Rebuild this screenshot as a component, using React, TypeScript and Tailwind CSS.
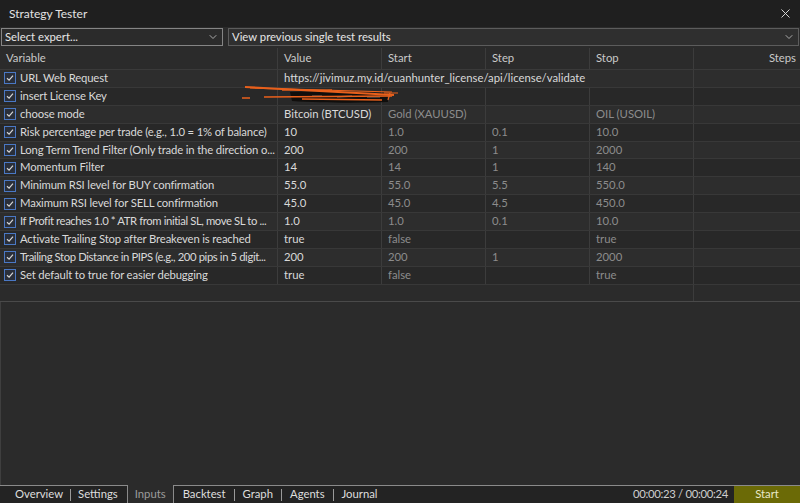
import { ChevronDown, X } from "lucide-react";

interface Param {
  name: string;
  value: string;
  start?: string;
  step?: string;
  stop?: string;
  tight?: boolean;
}

const params: Param[] = [
  { name: "URL Web Request", value: "https://jivimuz.my.id/cuanhunter_license/api/license/validate" },
  { name: "insert License Key", value: "" },
  { name: "choose mode", value: "Bitcoin (BTCUSD)", start: "Gold (XAUUSD)", step: "", stop: "OIL (USOIL)" },
  { name: "Risk percentage per trade (e.g., 1.0 = 1% of balance)", value: "10", start: "1.0", step: "0.1", stop: "10.0" },
  { name: "Long Term Trend Filter (Only trade in the direction o...", value: "200", start: "200", step: "1", stop: "2000" },
  { name: "Momentum Filter", value: "14", start: "14", step: "1", stop: "140" },
  { name: "Minimum RSI level for BUY confirmation", value: "55.0", start: "55.0", step: "5.5", stop: "550.0" },
  { name: "Maximum RSI level for SELL confirmation", value: "45.0", start: "45.0", step: "4.5", stop: "450.0" },
  { name: "If Profit reaches 1.0 * ATR from initial SL, move SL to ...", value: "1.0", start: "1.0", step: "0.1", stop: "10.0", tight: true },
  { name: "Activate Trailing Stop after Breakeven is reached", value: "true", start: "false", step: "", stop: "true" },
  { name: "Trailing Stop Distance in PIPS (e.g., 200 pips in 5 digit...", value: "200", start: "200", step: "1", stop: "2000", tight: true },
  { name: "Set default to true for easier debugging", value: "true", start: "false", step: "", stop: "true" },
];

function CheckBox() {
  return (
    <div className="w-[12px] h-[12px] border border-[#4a78c4] bg-[#2a2f3a] flex items-center justify-center shrink-0">
      <svg width="8" height="8" viewBox="0 0 8 8">
        <path d="M1 4.2 L3.1 6.2 L7 1.6" stroke="#d6d6d6" strokeWidth="1.2" fill="none" />
      </svg>
    </div>
  );
}

// orange marker scribble hiding the license key
function Scribble() {
  return (
    <svg className="absolute left-[242px] top-[84px] pointer-events-none" width="160" height="22" viewBox="0 0 160 22">
      <path d="M48 8 C80 7 110 8 145 9 L146 18 C120 19 80 19 50 17 Z" fill="#100e0c" />
      <path d="M70 12 L80 12 M95 13 L110 12 M125 13 L138 13" stroke="#5a4a40" strokeWidth="1.5" />
      <path d="M3 3 L152 11" stroke="#e8601c" strokeWidth="2" />
      <path d="M8 4 L150 8" stroke="#e8601c" strokeWidth="1.2" />
      <path d="M0 14 L8 14 M22 13 L150 12 M60 15 L140 16" stroke="#e8601c" strokeWidth="1.3" />
      <path d="M148 9 L146 16 M142 9 L156 9" stroke="#e8601c" strokeWidth="1.2" />
      <path d="M40 6 C60 5 70 7 90 6" stroke="#e8601c" strokeWidth="1.5" fill="none" />
    </svg>
  );
}

export default function App() {
  const cell = "h-full flex items-center px-[6px] border-r border-[#3c3c3c] overflow-hidden whitespace-nowrap";

  return (
    <div
      className="relative w-[800px] h-[503px] bg-[#2b2b2b] text-[#d9d9d9] text-[11.3px] overflow-hidden flex flex-col"
      style={{ fontFamily: 'Lato, "Noto Sans", sans-serif' }}
    >
      {/* title bar */}
      <div className="h-[27px] bg-[#1f1f1f] flex items-center justify-between pl-[9px] pr-[7px] shrink-0">
        <span className="text-[12px] text-[#e2e2e2]">Strategy Tester</span>
        <X size={15} strokeWidth={1.5} className="text-[#e0e0e0]" />
      </div>

      {/* selectors */}
      <div className="h-[20px] flex gap-[5px] px-[1px] mt-[1px] shrink-0">
        <div className="w-[222px] h-[18px] border border-[#858585] flex items-center justify-between px-[3px] bg-[#2b2b2b]">
          <span className="text-[#e6e6e6]">Select expert...</span>
          <ChevronDown size={12} className="text-[#aaaaaa]" />
        </div>
        <div className="flex-1 h-[18px] border border-[#5c5c5c] flex items-center justify-between px-[3px] bg-[#2f2f2f]">
          <span className="text-[#e6e6e6]">View previous single test results</span>
          <ChevronDown size={12} className="text-[#aaaaaa]" />
        </div>
      </div>

      {/* table header */}
      <div className="h-[22px] flex items-center text-[#c9c9c9] border-b border-[#3a3a3a] shrink-0">
        <div className={`${cell} w-[278px]`}>Variable</div>
        <div className={`${cell} w-[104px]`}>Value</div>
        <div className={`${cell} w-[104px]`}>Start</div>
        <div className={`${cell} w-[104px]`}>Step</div>
        <div className={`${cell} w-[104px]`}>Stop</div>
        <div className="flex-1 h-full flex items-center justify-end pr-[4px]">Steps</div>
      </div>

      {/* rows */}
      <div className="flex flex-col shrink-0">
        {params.map((p, i) => (
          <div
            key={p.name}
            className={`h-[17.9px] flex items-center border-b border-[#383838] ${i % 2 === 0 ? "bg-[#2d2d2d]" : "bg-[#282828]"}`}
          >
            <div className="w-[278px] h-full flex items-center gap-[4px] pl-[4px] border-r border-[#3c3c3c] whitespace-nowrap overflow-hidden">
              <CheckBox />
              <span className={p.tight ? "tracking-[-0.4px]" : "tracking-[-0.15px]"}>{p.name}</span>
            </div>
            {i === 0 ? (
              <div className="h-full flex items-center px-[6px] w-[416px] whitespace-nowrap border-r border-[#3c3c3c]">
                {p.value}
              </div>
            ) : (
              <>
                <div className={`${cell} w-[104px]`}>{p.value}</div>
                <div className={`${cell} w-[104px] text-[#8c8c8c]`}>{p.start}</div>
                <div className={`${cell} w-[104px] text-[#8c8c8c]`}>{p.step}</div>
                <div className={`${cell} w-[104px] text-[#8c8c8c]`}>{p.stop}</div>
              </>
            )}
            <div className="flex-1 h-full" />
          </div>
        ))}
        <div className="h-[17px] flex border-b border-[#4a4a4a]">
          <div className="w-[694px] h-full border-r border-[#3c3c3c]" />
        </div>
      </div>

      <div className="flex-1 border-l border-[#3f3f3f]" />

      {/* bottom tabs */}
      <div className="h-[18px] flex items-stretch bg-[#232323] shrink-0">
        <div className="flex items-center border-t border-[#8a8a8a] pl-[15px] pr-[9px] text-[#dedede]">
          <span>Overview</span>
          <span className="mx-[7px] w-[1px] h-[12px] bg-[#9a9a9a]" />
          <span>Settings</span>
        </div>
        <div className="flex items-center px-[7px] bg-[#2b2b2b] border-x border-[#8a8a8a] text-[#9b9b9b]">
          Inputs
        </div>
        <div className="flex items-center border-t border-[#8a8a8a] pl-[9px] text-[#dedede]">
          <span>Backtest</span>
          <span className="mx-[8px] w-[1px] h-[12px] bg-[#9a9a9a]" />
          <span>Graph</span>
          <span className="mx-[8px] w-[1px] h-[12px] bg-[#9a9a9a]" />
          <span>Agents</span>
          <span className="mx-[8px] w-[1px] h-[12px] bg-[#9a9a9a]" />
          <span>Journal</span>
        </div>
        <div className="flex-1 flex items-center justify-end border-t border-[#8a8a8a] pr-[6px] text-[#cfcfcf] tracking-[-0.3px]">
          00:00:23 / 00:00:24
        </div>
        <div className="w-[66px] flex items-center justify-center bg-[#6b6a06] text-[#e8e8c8] border-t border-[#8a8a8a]">
          Start
        </div>
      </div>

      <Scribble />
    </div>
  );
}
